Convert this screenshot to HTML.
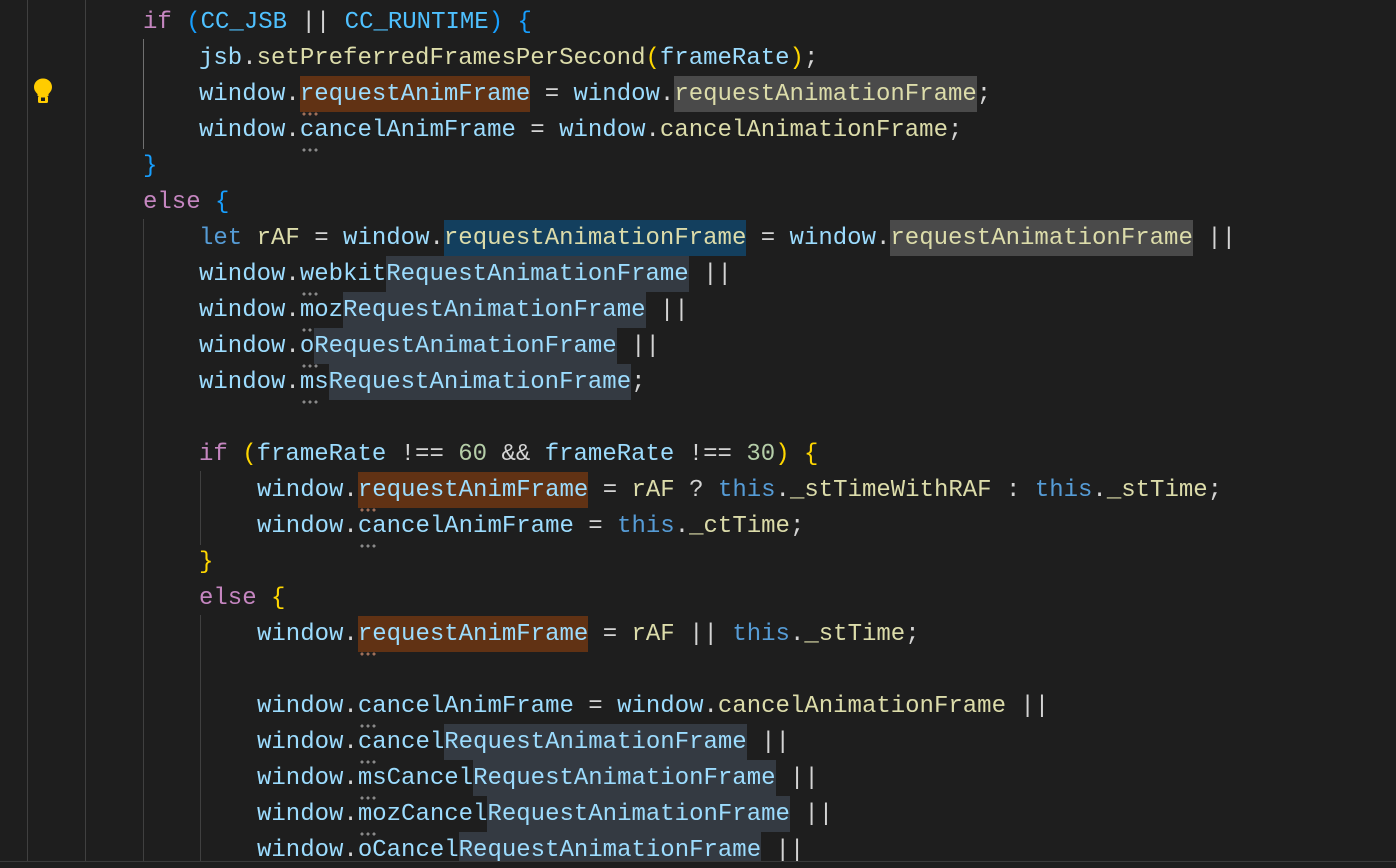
<!DOCTYPE html>
<html><head><meta charset="utf-8"><style>
html,body{margin:0;padding:0;background:#1e1e1e;width:1396px;height:868px;overflow:hidden;position:relative}
.g{position:absolute;width:1px;background:#404040}
.l{position:absolute;left:0;margin-top:1px;height:36px;line-height:37px;font-family:"Liberation Mono",monospace;font-size:24px;white-space:pre;color:#9CDCFE}
.h{display:inline-block;height:36px}
.k{color:#C586C0}.b{color:#569CD6}.v{color:#9CDCFE}.f{color:#DCDCAA}.n{color:#B5CEA8}.o{color:#D4D4D4}.c{color:#4FC1FF}.p1{color:#179FFF}.p2{color:#FFD700}
.br{background:#613214}.gr{background:#4a4a4a}.bl{background:#133f5e}.sl{background:#343a42}
.d{position:relative}
.d::after{content:"";position:absolute;left:1px;top:31px;width:18px;height:4px;background:radial-gradient(circle,#8a8a8a 1.4px,transparent 1.7px) 0 0/6px 4px repeat-x}
.dr::after{background:radial-gradient(circle,#a0705a 1.4px,transparent 1.7px) 0 0/6px 4px repeat-x}
</style></head><body>
<div class="g" style="left:27px;top:0;height:861px"></div>
<div class="g" style="left:85px;top:0;height:861px"></div>
<div class="g" style="left:143px;top:39px;height:110px;background:#707070"></div>
<div class="g" style="left:143px;top:219px;height:642px"></div>
<div class="g" style="left:200px;top:471px;height:74px"></div>
<div class="g" style="left:200px;top:615px;height:246px"></div>
<svg style="position:absolute;left:33px;top:78px" width="20" height="27" viewBox="0 0 20 27"><path d="M10 0.5C4.8 0.5 1 4.3 1 9c0 3.3 1.8 5.2 3.5 7v2h11v-2c1.7-1.8 3.5-3.7 3.5-7 0-4.7-3.8-8.5-9-8.5z" fill="#FFCC00"/><rect x="5" y="18" width="10" height="7" rx="1.5" fill="#FFCC00"/><rect x="8" y="19.5" width="4" height="3.5" fill="#1e1e1e"/></svg>

<div class="l" style="top:3px;left:143px"><span class="k">if</span> <span class="p1">(</span><span class="c">CC_JSB</span> <span class="o">||</span> <span class="c">CC_RUNTIME</span><span class="p1">)</span> <span class="p1">{</span></div>
<div class="l" style="top:39px;left:199px">jsb<span class="o">.</span><span class="f">setPreferredFramesPerSecond</span><span class="p2">(</span>frameRate<span class="p2">)</span><span class="o">;</span></div>
<div class="l" style="top:75px;left:199px">window<span class="o">.</span><span class="h br"><span class="d dr">r</span>equestAnimFrame</span> <span class="o">=</span> window<span class="o">.</span><span class="h gr f">requestAnimationFrame</span><span class="o">;</span></div>
<div class="l" style="top:111px;left:199px">window<span class="o">.</span><span class="d">c</span>ancelAnimFrame <span class="o">=</span> window<span class="o">.</span><span class="f">cancelAnimationFrame</span><span class="o">;</span></div>
<div class="l" style="top:147px;left:143px"><span class="p1">}</span></div>
<div class="l" style="top:183px;left:143px"><span class="k">else</span> <span class="p1">{</span></div>
<div class="l" style="top:219px;left:199px"><span class="b">let</span> <span class="f">rAF</span> <span class="o">=</span> window<span class="o">.</span><span class="h bl f">requestAnimationFrame</span> <span class="o">=</span> window<span class="o">.</span><span class="h gr f">requestAnimationFrame</span> <span class="o">||</span></div>
<div class="l" style="top:255px;left:199px">window<span class="o">.</span><span class="d">w</span>ebkit<span class="h sl">RequestAnimationFrame</span> <span class="o">||</span></div>
<div class="l" style="top:291px;left:199px">window<span class="o">.</span><span class="d">m</span>oz<span class="h sl">RequestAnimationFrame</span> <span class="o">||</span></div>
<div class="l" style="top:327px;left:199px">window<span class="o">.</span><span class="d">o</span><span class="h sl">RequestAnimationFrame</span> <span class="o">||</span></div>
<div class="l" style="top:363px;left:199px">window<span class="o">.</span><span class="d">m</span>s<span class="h sl">RequestAnimationFrame</span><span class="o">;</span></div>
<div class="l" style="top:435px;left:199px"><span class="k">if</span> <span class="p2">(</span>frameRate <span class="o">!==</span> <span class="n">60</span> <span class="o">&amp;&amp;</span> frameRate <span class="o">!==</span> <span class="n">30</span><span class="p2">)</span> <span class="p2">{</span></div>
<div class="l" style="top:471px;left:257px">window<span class="o">.</span><span class="h br"><span class="d dr">r</span>equestAnimFrame</span> <span class="o">=</span> <span class="f">rAF</span> <span class="o">?</span> <span class="b">this</span><span class="o">.</span><span class="f">_stTimeWithRAF</span> <span class="o">:</span> <span class="b">this</span><span class="o">.</span><span class="f">_stTime</span><span class="o">;</span></div>
<div class="l" style="top:507px;left:257px">window<span class="o">.</span><span class="d">c</span>ancelAnimFrame <span class="o">=</span> <span class="b">this</span><span class="o">.</span><span class="f">_ctTime</span><span class="o">;</span></div>
<div class="l" style="top:543px;left:199px"><span class="p2">}</span></div>
<div class="l" style="top:579px;left:199px"><span class="k">else</span> <span class="p2">{</span></div>
<div class="l" style="top:615px;left:257px">window<span class="o">.</span><span class="h br"><span class="d dr">r</span>equestAnimFrame</span> <span class="o">=</span> <span class="f">rAF</span> <span class="o">||</span> <span class="b">this</span><span class="o">.</span><span class="f">_stTime</span><span class="o">;</span></div>
<div class="l" style="top:687px;left:257px">window<span class="o">.</span><span class="d">c</span>ancelAnimFrame <span class="o">=</span> window<span class="o">.</span><span class="f">cancelAnimationFrame</span> <span class="o">||</span></div>
<div class="l" style="top:723px;left:257px">window<span class="o">.</span><span class="d">c</span>ancel<span class="h sl">RequestAnimationFrame</span> <span class="o">||</span></div>
<div class="l" style="top:759px;left:257px">window<span class="o">.</span><span class="d">m</span>sCancel<span class="h sl">RequestAnimationFrame</span> <span class="o">||</span></div>
<div class="l" style="top:795px;left:257px">window<span class="o">.</span><span class="d">m</span>ozCancel<span class="h sl">RequestAnimationFrame</span> <span class="o">||</span></div>
<div class="l" style="top:831px;left:257px">window<span class="o">.</span>oCancel<span class="h sl">RequestAnimationFrame</span> <span class="o">||</span></div>
<div style="position:absolute;left:0;top:861px;width:1396px;height:7px;background:#1e1e1e;border-top:1px solid #3a3a3a"></div>
</body></html>
